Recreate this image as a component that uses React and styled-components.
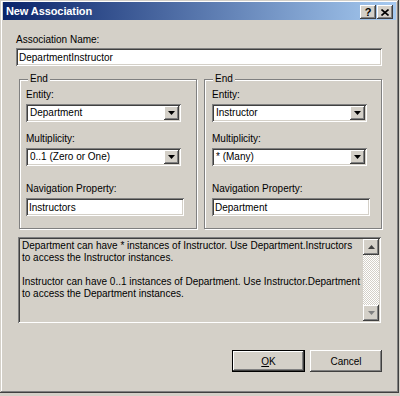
import React from 'react';
import styled, { createGlobalStyle, css } from 'styled-components';

const GlobalStyle = createGlobalStyle`
  html, body {
    margin: 0;
    padding: 0;
    background: #d4d0c8;
  }
  body {
    font-family: "Liberation Sans", Arial, sans-serif;
    font-size: 10px;
    color: #000;
  }
`;

const raised = css`
  background: #d4d0c8;
  box-shadow: inset -1px -1px #404040, inset 1px 1px #fff,
    inset -2px -2px #808080, inset 2px 2px #d4d0c8;
`;

const sunken = css`
  box-shadow: inset 1px 1px #808080, inset -1px -1px #fff,
    inset 2px 2px #404040, inset -2px -2px #d4d0c8;
`;

const Window = styled.div`
  width: 399px;
  height: 393px;
  box-sizing: border-box;
  padding: 2px 3px 3px 3px;
  background: #d4d0c8;
  box-shadow: inset -1px -1px #404040, inset 1px 1px #d4d0c8,
    inset -2px -2px #808080, inset 2px 2px #fff;
  display: flex;
  flex-direction: column;
`;

const TitleBar = styled.div`
  height: 18px;
  flex: none;
  display: flex;
  align-items: center;
  justify-content: space-between;
  padding: 0 3px 0 3px;
  background: linear-gradient(to right, #0a246a, #a6caf0);
`;

const Title = styled.span`
  color: #fff;
  font-size: 11px;
  font-weight: bold;
  letter-spacing: -0.1px;
`;

const TitleButtons = styled.div`
  display: flex;
  gap: 1px;
  margin-top: 2px;
`;

const TitleButton = styled.div`
  ${raised};
  width: 16px;
  height: 14px;
  display: flex;
  align-items: center;
  justify-content: center;
  font-size: 11px;
  font-weight: bold;
  line-height: 1;
`;

const Body = styled.div`
  flex: 1;
  display: flex;
  flex-direction: column;
  padding: 14px 14px 0 13px;
`;

const Label = styled.div`
  line-height: 12px;
  height: 12px;
  margin-top: ${({ $top }) => $top || 0}px;
  margin-bottom: ${({ $gap }) => ($gap === undefined ? 3 : $gap)}px;
  white-space: nowrap;
`;

const TextBox = styled.input`
  ${sunken};
  display: block;
  box-sizing: border-box;
  width: ${({ $width }) => $width}px;
  height: 18px;
  margin: 0;
  border: 0;
  padding: 0 3px;
  background: #fff;
  font: inherit;
  font-size: 10px;
  color: #000;
  outline: none;
`;

const Groups = styled.div`
  display: grid;
  grid-template-columns: 178px 178px;
  gap: 7px;
  margin: 7px 0 0 3px;
`;

const GroupBox = styled.fieldset`
  margin: 0;
  min-inline-size: 0;
  padding: 4px 0 12px ${({ $pad }) => $pad}px;
  border: 1px solid #808080;
  box-shadow: inset 1px 1px #fff, 1px 1px #fff;
`;

const Legend = styled.legend`
  margin-left: ${({ $offset }) => $offset}px;
  padding: 0 2px;
  line-height: 12px;
  background: #d4d0c8;
`;

const Combo = styled.div`
  ${sunken};
  box-sizing: border-box;
  width: 155px;
  height: 18px;
  padding: 2px;
  background: #fff;
  display: flex;
  align-items: stretch;
`;

const ComboValue = styled.span`
  flex: 1;
  padding-left: 2px;
  line-height: 14px;
  white-space: nowrap;
`;

const DropButton = styled.span`
  ${raised};
  width: 15px;
  display: flex;
  align-items: center;
  justify-content: center;
`;

const InfoBox = styled.div`
  ${sunken};
  box-sizing: border-box;
  width: 363px;
  height: 86px;
  margin: 8px 0 0 2px;
  padding: 2px;
  background: #d4d0c8;
  display: flex;
`;

const InfoText = styled.div`
  flex: 1;
  padding: 1px 0 0 2px;
  line-height: 12px;
`;

const InfoLine = styled.div`
  height: 12px;
  white-space: nowrap;
`;

const ScrollBar = styled.div`
  width: 16px;
  display: flex;
  flex-direction: column;
  background-color: #d4d0c8;
  background-image: conic-gradient(#fff 25%, #d4d0c8 0 50%, #fff 0 75%, #d4d0c8 0);
  background-size: 2px 2px;
`;

const ScrollButton = styled.div`
  ${raised};
  height: 16px;
  display: flex;
  align-items: center;
  justify-content: center;
`;

const ScrollTrack = styled.div`
  flex: 1;
`;

const Footer = styled.div`
  display: flex;
  justify-content: flex-end;
  gap: 5px;
  margin-top: 27px;
`;

const Button = styled.button`
  ${raised};
  box-sizing: border-box;
  width: ${({ $width }) => $width}px;
  height: 22px;
  margin: 0;
  padding: 0;
  border: ${({ $default }) => ($default ? '1px solid #000' : '0')};
  font: inherit;
  font-size: 10px;
  color: #000;
`;

const Arrow = ({ dir = 'down', color = '#000' }) => (
  <svg width="7" height="4" viewBox="0 0 7 4">
    {dir === 'down' ? (
      <polygon points="0,0 7,0 3.5,4" fill={color} />
    ) : (
      <polygon points="0,4 7,4 3.5,0" fill={color} />
    )}
  </svg>
);

const CloseGlyph = () => (
  <svg width="8" height="7" viewBox="0 0 8 7">
    <path d="M0.5 0.5 L7.5 6.5 M7.5 0.5 L0.5 6.5" stroke="#000" strokeWidth="1.6" />
  </svg>
);

const ComboBox = ({ value }) => (
  <Combo>
    <ComboValue>{value}</ComboValue>
    <DropButton>
      <Arrow />
    </DropButton>
  </Combo>
);

const ends = [
  { entity: 'Department', multiplicity: '0..1 (Zero or One)', nav: 'Instructors', pad: 6 },
  { entity: 'Instructor', multiplicity: '* (Many)', nav: 'Department', pad: 7 },
];

const infoLines = [
  'Department can have * instances of Instructor. Use Department.Instructors',
  'to access the Instructor instances.',
  '',
  'Instructor can have 0..1 instances of Department. Use Instructor.Department',
  'to access the Department instances.',
];

const App = () => (
  <>
    <GlobalStyle />
    <Window>
      <TitleBar>
        <Title>New Association</Title>
        <TitleButtons>
          <TitleButton>?</TitleButton>
          <TitleButton>
            <CloseGlyph />
          </TitleButton>
        </TitleButtons>
      </TitleBar>
      <Body>
        <Label $gap={2}>Association Name:</Label>
        <TextBox $width={366} readOnly defaultValue="DepartmentInstructor" />

        <Groups>
          {ends.map((end, i) => (
            <GroupBox key={i} $pad={end.pad}>
              <Legend $offset={10 - end.pad - 2}>End</Legend>
              <Label>Entity:</Label>
              <ComboBox value={end.entity} />
              <Label $top={11}>Multiplicity:</Label>
              <ComboBox value={end.multiplicity} />
              <Label $top={17}>Navigation Property:</Label>
              <TextBox $width={158} readOnly defaultValue={end.nav} />
            </GroupBox>
          ))}
        </Groups>

        <InfoBox>
          <InfoText>
            {infoLines.map((line, i) => (
              <InfoLine key={i}>{line}</InfoLine>
            ))}
          </InfoText>
          <ScrollBar>
            <ScrollButton>
              <Arrow dir="up" color="#404040" />
            </ScrollButton>
            <ScrollTrack />
            <ScrollButton>
              <Arrow color="#808080" />
            </ScrollButton>
          </ScrollBar>
        </InfoBox>

        <Footer>
          <Button $default $width={73}>
            <u>O</u>K
          </Button>
          <Button $width={72}>Cancel</Button>
        </Footer>
      </Body>
    </Window>
  </>
);

export default App;
